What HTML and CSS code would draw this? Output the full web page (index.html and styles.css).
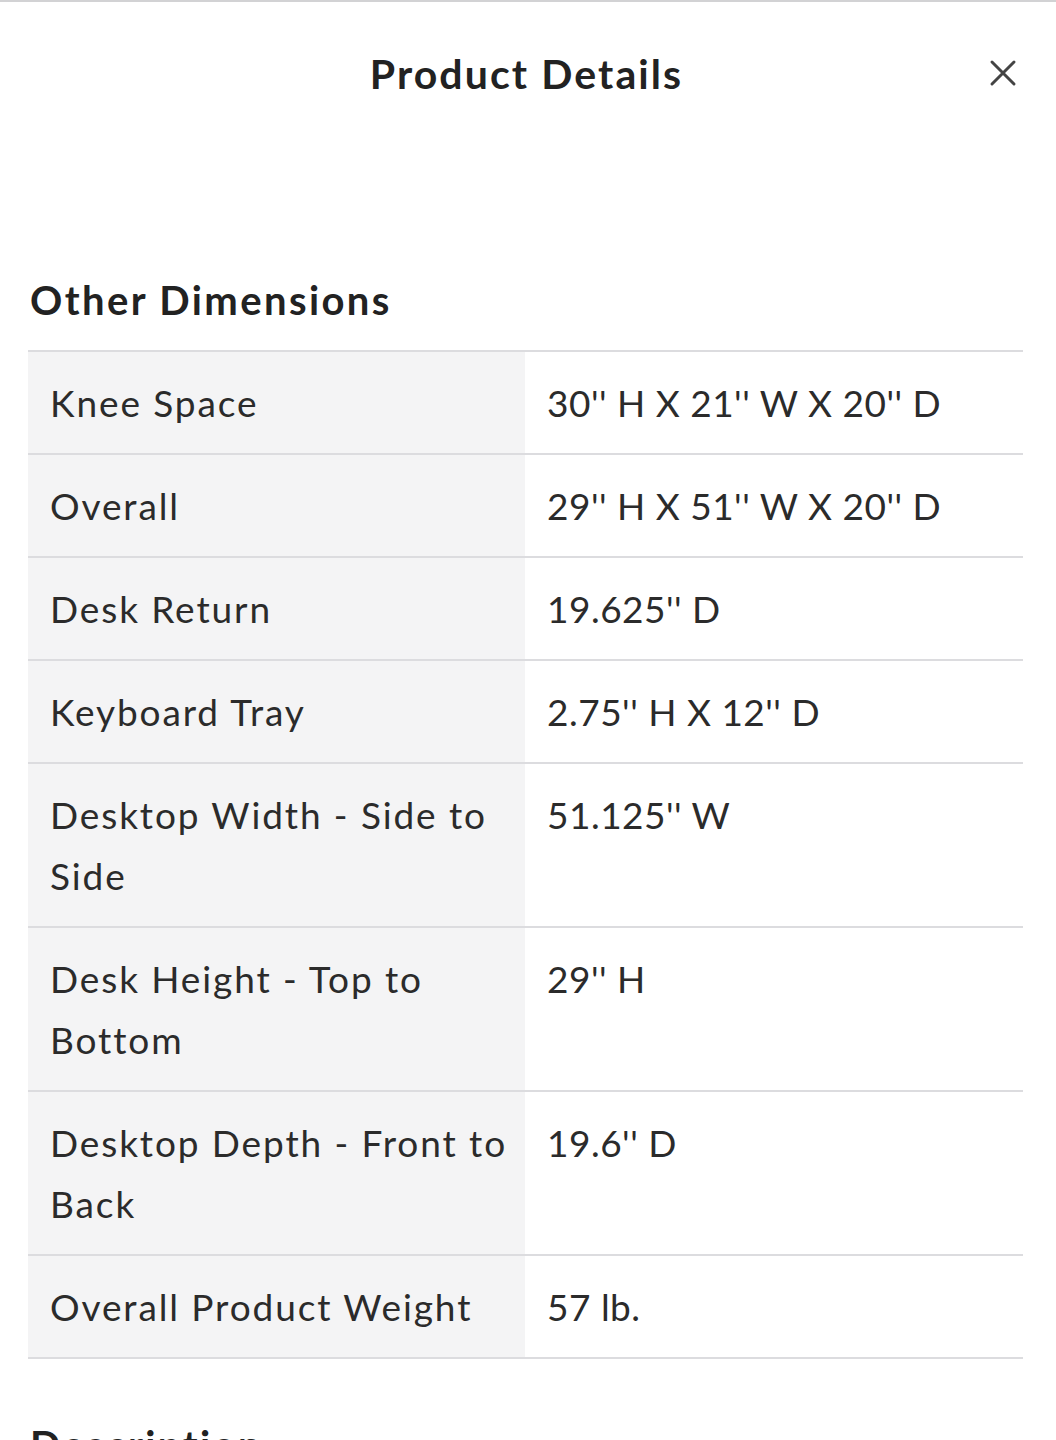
FILE: index.html
```html
<!DOCTYPE html>
<html lang="en">
<head>
<meta charset="utf-8">
<title>Product Details</title>
<link rel="stylesheet" href="styles.css">
</head>
<body>
<div class="sheet">
  <header class="sheet-header">
    <h1 class="sheet-title">Product Details</h1>
    <button class="close-btn" aria-label="Close">
      <svg width="28" height="28" viewBox="0 0 28 28"><path d="M3 3 L25 25 M25 3 L3 25" stroke="#444" stroke-width="3" stroke-linecap="round" fill="none"/></svg>
    </button>
  </header>
  <section class="section">
    <h2 class="section-title">Other Dimensions</h2>
    <div class="spec-table">
      <div class="spec-row"><div class="spec-label">Knee Space</div><div class="spec-value">30'' H X 21'' W X 20'' D</div></div>
      <div class="spec-row"><div class="spec-label">Overall</div><div class="spec-value">29'' H X 51'' W X 20'' D</div></div>
      <div class="spec-row"><div class="spec-label">Desk Return</div><div class="spec-value">19.625'' D</div></div>
      <div class="spec-row"><div class="spec-label">Keyboard Tray</div><div class="spec-value">2.75'' H X 12'' D</div></div>
      <div class="spec-row"><div class="spec-label">Desktop Width - Side to Side</div><div class="spec-value">51.125'' W</div></div>
      <div class="spec-row"><div class="spec-label">Desk Height - Top to Bottom</div><div class="spec-value">29'' H</div></div>
      <div class="spec-row"><div class="spec-label">Desktop Depth - Front to Back</div><div class="spec-value">19.6'' D</div></div>
      <div class="spec-row"><div class="spec-label">Overall Product Weight</div><div class="spec-value">57 lb.</div></div>
    </div>
  </section>
  <section class="section next">
    <h2 class="section-title">Description</h2>
  </section>
</div>
</body>
</html>
```
FILE: styles.css
```css
html, body {
  margin: 0;
  padding: 0;
  background: #fff;
}
body {
  height: 1440px;
  overflow: hidden;
  font-family: "Lato", "Open Sans", sans-serif;
  color: #2b2b2b;
}
.sheet {
  border-top: 2px solid #d2d2d4;
}
.sheet-header {
  position: relative;
  height: 146px;
  display: flex;
  justify-content: center;
  align-items: flex-start;
}
.sheet-title {
  margin: 48px 0 0 -3px;
  font-size: 41px;
  font-weight: 700;
  line-height: 48px;
  letter-spacing: 2.1px;
  color: #222;
}
.close-btn {
  position: absolute;
  right: 38px;
  top: 56px;
  width: 30px;
  height: 30px;
  padding: 0;
  border: 0;
  background: none;
  display: flex;
  align-items: center;
  justify-content: center;
}
.section {
  padding: 0 33px 0 28px;
}
.section-title {
  margin: 128px 0 0 2px;
  font-size: 40px;
  font-weight: 700;
  line-height: 48px;
  letter-spacing: 2.4px;
  color: #222;
}
.spec-table {
  margin-top: 26px;
  border-top: 2px solid #dcdcdf;
}
.spec-row {
  display: grid;
  grid-template-columns: 497px 1fr;
  border-bottom: 2px solid #dcdcdf;
}
.spec-label,
.spec-value {
  padding: 20px 22px;
  font-size: 37px;
  line-height: 61px;
}
.spec-label {
  padding-right: 8px;
  background: #f4f4f5;
  letter-spacing: 1.9px;
}
.spec-value {
  letter-spacing: 0.5px;
}
.next .section-title {
  margin-top: 62px;
}
```
